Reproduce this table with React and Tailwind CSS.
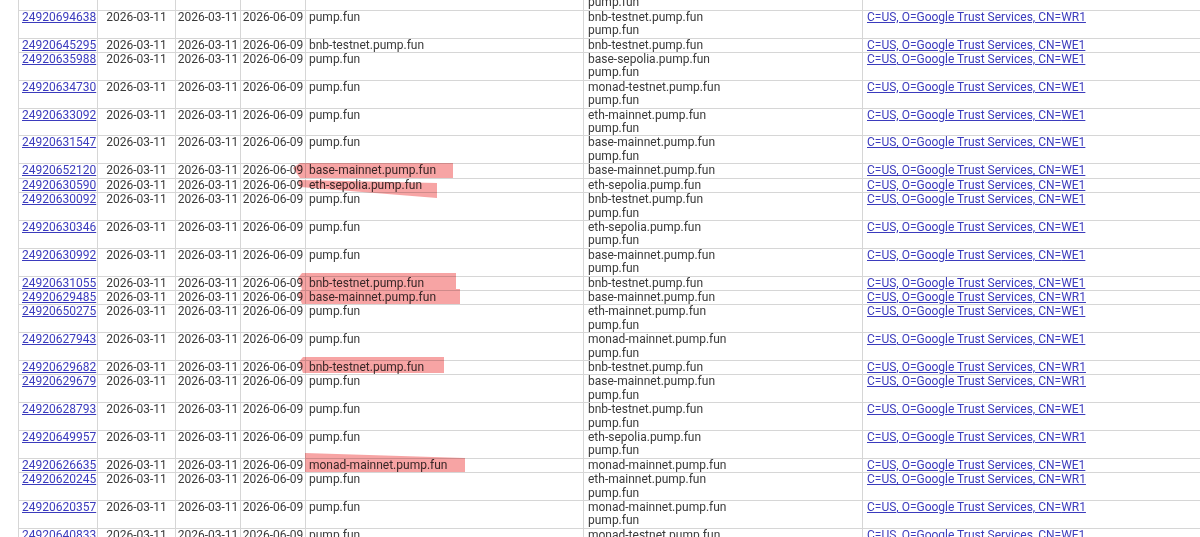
const rows = [
  { id: '', cn: '', ids: ['\u00a0', 'pump.fun'], ca: '', top: true },
  { id: '24920694638', cn: 'pump.fun', ids: ['bnb-testnet.pump.fun', 'pump.fun'], ca: 'WR1' },
  { id: '24920645295', cn: 'bnb-testnet.pump.fun', ids: ['bnb-testnet.pump.fun'], ca: 'WE1' },
  { id: '24920635988', cn: 'pump.fun', ids: ['base-sepolia.pump.fun', 'pump.fun'], ca: 'WE1' },
  { id: '24920634730', cn: 'pump.fun', ids: ['monad-testnet.pump.fun', 'pump.fun'], ca: 'WE1' },
  { id: '24920633092', cn: 'pump.fun', ids: ['eth-mainnet.pump.fun', 'pump.fun'], ca: 'WE1' },
  { id: '24920631547', cn: 'pump.fun', ids: ['base-mainnet.pump.fun', 'pump.fun'], ca: 'WE1' },
  { id: '24920652120', cn: 'base-mainnet.pump.fun', ids: ['base-mainnet.pump.fun'], ca: 'WE1' },
  { id: '24920630590', cn: 'eth-sepolia.pump.fun', ids: ['eth-sepolia.pump.fun'], ca: 'WE1' },
  { id: '24920630092', cn: 'pump.fun', ids: ['bnb-testnet.pump.fun', 'pump.fun'], ca: 'WE1' },
  { id: '24920630346', cn: 'pump.fun', ids: ['eth-sepolia.pump.fun', 'pump.fun'], ca: 'WE1' },
  { id: '24920630992', cn: 'pump.fun', ids: ['base-mainnet.pump.fun', 'pump.fun'], ca: 'WE1' },
  { id: '24920631055', cn: 'bnb-testnet.pump.fun', ids: ['bnb-testnet.pump.fun'], ca: 'WE1' },
  { id: '24920629485', cn: 'base-mainnet.pump.fun', ids: ['base-mainnet.pump.fun'], ca: 'WR1' },
  { id: '24920650275', cn: 'pump.fun', ids: ['eth-mainnet.pump.fun', 'pump.fun'], ca: 'WE1' },
  { id: '24920627943', cn: 'pump.fun', ids: ['monad-mainnet.pump.fun', 'pump.fun'], ca: 'WE1' },
  { id: '24920629682', cn: 'bnb-testnet.pump.fun', ids: ['bnb-testnet.pump.fun'], ca: 'WR1' },
  { id: '24920629679', cn: 'pump.fun', ids: ['base-mainnet.pump.fun', 'pump.fun'], ca: 'WR1' },
  { id: '24920628793', cn: 'pump.fun', ids: ['bnb-testnet.pump.fun', 'pump.fun'], ca: 'WE1' },
  { id: '24920649957', cn: 'pump.fun', ids: ['eth-sepolia.pump.fun', 'pump.fun'], ca: 'WR1' },
  { id: '24920626635', cn: 'monad-mainnet.pump.fun', ids: ['monad-mainnet.pump.fun'], ca: 'WE1' },
  { id: '24920620245', cn: 'pump.fun', ids: ['eth-mainnet.pump.fun', 'pump.fun'], ca: 'WR1' },
  { id: '24920620357', cn: 'pump.fun', ids: ['monad-mainnet.pump.fun', 'pump.fun'], ca: 'WR1' },
  { id: '24920640833', cn: 'pump.fun', ids: ['monad-testnet.pump.fun', 'pump.fun'], ca: 'WE1' },
];

// marker strokes drawn over the screenshot
const marks = [
  '293,168 300,163 453,163 453,178 300,178',
  '298,182 300,180 437,183 437,198 300,187',
  '298,278 302,273 456,273 456,289 302,289',
  '298,294 302,289 460,289 460,304 302,304',
  '299,362 303,357 444,357 444,373 303,373',
  '305,453 465,458 465,472 305,472',
];

const cell = 'border border-[#d6d6d6] align-top p-0 leading-[13.4px]';

export default function App() {
  return (
    <div className="relative h-[537px] w-[1200px] overflow-hidden bg-white">
      <table
        className="-mt-[18px] ml-[18px] table-fixed border-collapse text-[12px] text-[#3a3a3a] w-[1300px]"
        style={{ fontFamily: 'Roboto, "Noto Sans", sans-serif' }}
      >
        <colgroup>
          <col className="w-[79px]" />
          <col className="w-[78px]" />
          <col className="w-[65px]" />
          <col className="w-[65px]" />
          <col className="w-[278px]" />
          <col className="w-[279px]" />
          <col />
        </colgroup>
        <tbody>
          {rows.map((r, i) => (
            <tr key={i}>
              <td className={`${cell} pl-[3px]`}>
                <a href="#" className="text-[#3b3bbd] underline">{r.id}</a>
              </td>
              <td className={`${cell} text-center`}>{r.top ? '' : '2026-03-11'}</td>
              <td className={`${cell} text-center`}>{r.top ? '' : '2026-03-11'}</td>
              <td className={`${cell} text-center`}>{r.top ? '' : '2026-06-09'}</td>
              <td className={`${cell} pl-[3px]`}>{r.cn}</td>
              <td className={`${cell} pl-[4px]`}>
                {r.ids.map((d, j) => (
                  <div key={j}>{d}</div>
                ))}
              </td>
              <td className={`${cell} pl-[4px]`}>
                {r.ca && (
                  <a href="#" className="text-[#3b3bbd] underline">
                    C=US, O=Google Trust Services, CN={r.ca}
                  </a>
                )}
              </td>
            </tr>
          ))}
        </tbody>
      </table>
      <svg className="pointer-events-none absolute left-0 top-0 mix-blend-multiply" width="1200" height="537">
        {marks.map((p, i) => (
          <polygon key={i} points={p} fill="#f47e7e" opacity="0.7" />
        ))}
      </svg>
    </div>
  );
}
